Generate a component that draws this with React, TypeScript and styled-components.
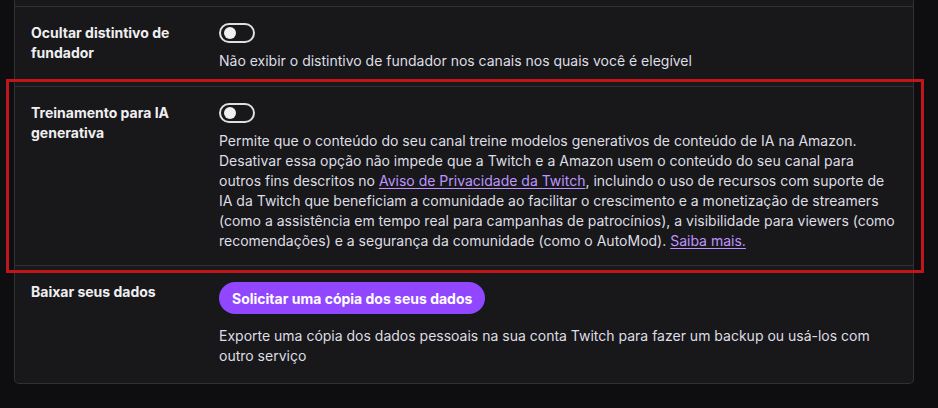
import React from "react";
import styled, { createGlobalStyle } from "styled-components";

const GlobalStyle = createGlobalStyle`
  html, body {
    margin: 0;
    padding: 0;
    background: #0e0e10;
  }
  body {
    font-family: Inter, "Noto Sans", "Liberation Sans", sans-serif;
    color: #efeff1;
    -webkit-font-smoothing: antialiased;
  }
`;

const Page = styled.div`
  position: relative;
  width: 938px;
  height: 408px;
  overflow: hidden;
  background: #0e0e10;
  padding-left: 14px;
  box-sizing: border-box;
`;

const Panel = styled.section`
  width: 900px;
  box-sizing: border-box;
  background: #18181b;
  border: 1px solid #303035;
  border-top: none;
  border-radius: 0 0 5px 5px;
  padding-top: 6px;
`;

const Row = styled.div<{ $pb?: number }>`
  display: grid;
  grid-template-columns: 188px 1fr;
  border-top: 1px solid #303035;
  padding: 16px 16px ${(p) => p.$pb ?? 15}px 16px;
`;

const Label = styled.div`
  font-size: 14px;
  line-height: 20px;
  font-weight: 700;
  color: #efeff1;
  padding-right: 16px;
`;

const Control = styled.div<{ $gap?: number }>`
  display: flex;
  flex-direction: column;
  align-items: flex-start;
  gap: ${(p) => p.$gap ?? 8}px;
`;

const Toggle = styled.div`
  width: 36px;
  height: 20px;
  box-sizing: border-box;
  border: 2px solid #dedee3;
  border-radius: 10px;
  display: flex;
  align-items: center;
  padding-left: 3px;
`;

const Knob = styled.span`
  width: 12px;
  height: 12px;
  border-radius: 50%;
  background: #efeff1;
`;

const Description = styled.p`
  margin: 0;
  font-size: 14px;
  line-height: 20px;
  color: #dedee3;
`;

const Link = styled.a`
  color: #bf94ff;
  text-decoration: underline;
  text-underline-offset: 2px;
  cursor: pointer;
`;

const Button = styled.button`
  height: 32px;
  border: none;
  border-radius: 16px;
  background: #9147ff;
  color: #ffffff;
  font-family: inherit;
  font-size: 14px;
  font-weight: 700;
  padding: 0 13px;
  cursor: pointer;
`;

const Highlight = styled.div`
  position: absolute;
  left: 6px;
  top: 79px;
  width: 918px;
  height: 194px;
  box-sizing: border-box;
  border: 3px solid #c0161b;
  pointer-events: none;
`;

export default function App() {
  return (
    <>
      <GlobalStyle />
      <Page>
        <Panel>
          <Row>
            <Label>Ocultar distintivo de fundador</Label>
            <Control>
              <Toggle>
                <Knob />
              </Toggle>
              <Description>
                Não exibir o distintivo de fundador nos canais nos quais você é elegível
              </Description>
            </Control>
          </Row>
          <Row $pb={14}>
            <Label>Treinamento para IA generativa</Label>
            <Control>
              <Toggle>
                <Knob />
              </Toggle>
              <Description>
                Permite que o conteúdo do seu canal treine modelos generativos de conteúdo de IA na
                Amazon. Desativar essa opção não impede que a Twitch e a Amazon usem o conteúdo do
                seu canal para outros fins descritos no{" "}
                <Link>Aviso de Privacidade da Twitch</Link>, incluindo o uso de recursos com suporte
                de IA da Twitch que beneficiam a comunidade ao facilitar o crescimento e a
                monetização de streamers (como a assistência em tempo real para campanhas de
                patrocínios), a visibilidade para viewers (como recomendações) e a segurança da
                comunidade (como o AutoMod). <Link>Saiba mais.</Link>
              </Description>
            </Control>
          </Row>
          <Row $pb={17}>
            <Label>Baixar seus dados</Label>
            <Control $gap={12}>
              <Button>Solicitar uma cópia dos seus dados</Button>
              <Description>
                Exporte uma cópia dos dados pessoais na sua conta Twitch para fazer um backup ou
                usá-los com outro serviço
              </Description>
            </Control>
          </Row>
        </Panel>
        <Highlight />
      </Page>
    </>
  );
}
